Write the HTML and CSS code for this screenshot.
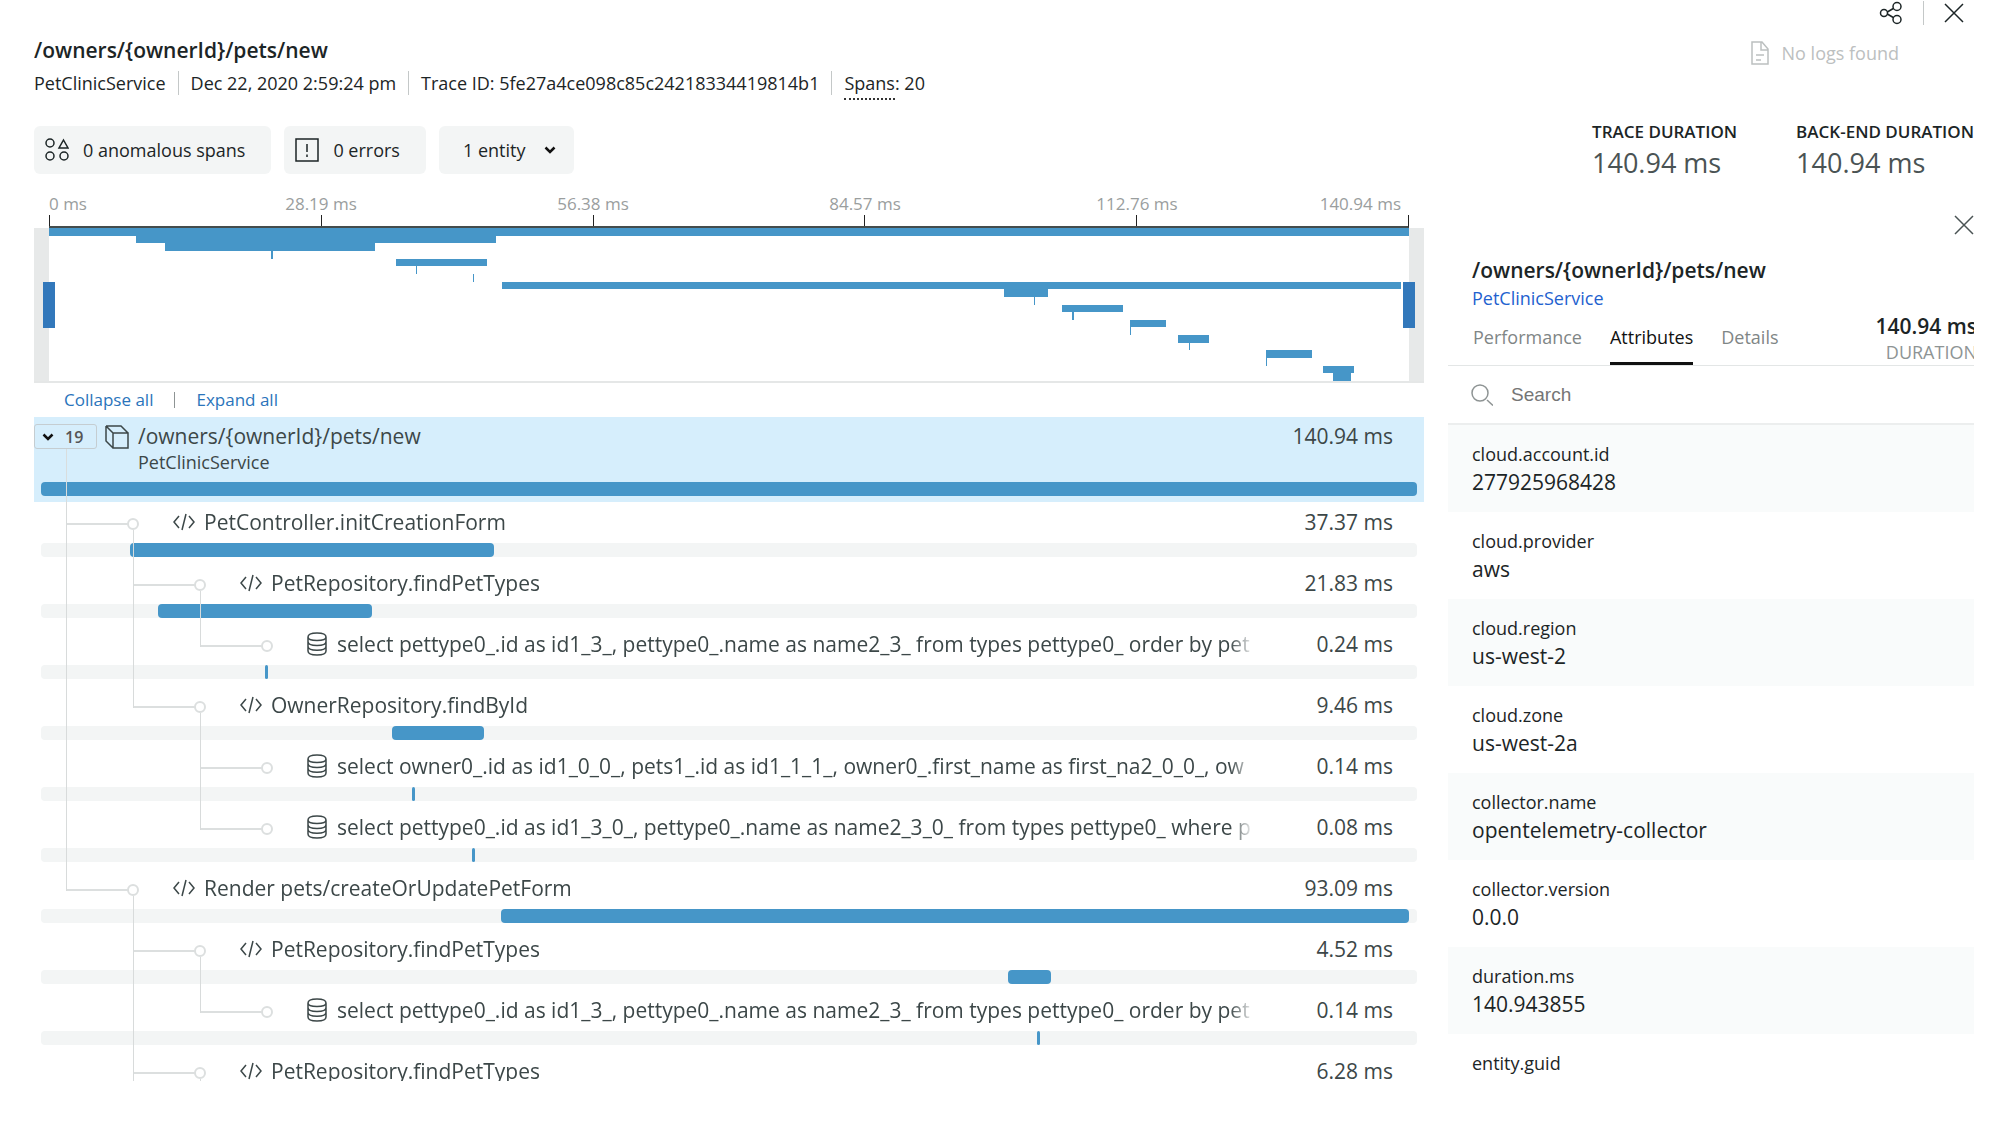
FILE: index.html
```html
<!DOCTYPE html>
<html lang="en">
<head>
<meta charset="utf-8">
<title>/owners/{ownerId}/pets/new</title>
<link rel="stylesheet" href="styles.css">
</head>
<body>
<svg class="sprite" aria-hidden="true">
  <symbol id="code" viewBox="0 0 22 18"><path d="M6 3 1 9l5 6M16 3l5 6-5 6M13 1 9 17"/></symbol>
  <symbol id="database" viewBox="0 0 20 24"><path d="M1 5C1 2.500 5 1 10 1s9 1.500 9 4-4 3.500-9 3.500S1 7.500 1 5zM1 5v14c0 2.500 4 4 9 4s9-1.500 9-4V5M1 9.500c0 2.500 4 4 9 4s9-1.500 9-4M1 14.200c0 2.500 4 4 9 4s9-1.500 9-4"/></symbol>
  <symbol id="close" viewBox="0 0 20 20"><path d="M1 1l18 18M19 1 1 19"/></symbol>
  <symbol id="chevron" viewBox="0 0 12 10"><path d="M1.500 2.500 6 7l4.500-4.500"/></symbol>
</svg>
<div class="app">
  <header class="head">
    <div class="heading">
      <h1 class="title">/owners/{ownerId}/pets/new</h1>
      <ul class="meta">
        <li>PetClinicService</li>
        <li>Dec 22, 2020 2:59:24 pm</li>
        <li>Trace ID: 5fe27a4ce098c85c24218334419814b1</li>
        <li><span class="hint">Spans</span>: 20</li>
      </ul>
    </div>
    <div class="head-side">
      <div class="actions">
        <button class="icon-button" aria-label="Share"><svg width="24" height="24" viewBox="0 0 24 24"><circle cx="5" cy="12" r="3.500"/><circle cx="18" cy="5.500" r="4"/><circle cx="18" cy="18.500" r="4"/><path d="M8.300 11 14.300 7.500M8.300 13l6 3.500"/></svg></button>
        <span class="divider"></span>
        <button class="icon-button" aria-label="Close trace"><svg width="20" height="20"><use href="#close"/></svg></button>
      </div>
      <div class="logs"><svg width="18" height="24" viewBox="0 0 18 24"><path d="M1 1h10l6 7v15H1zM10 1v8h7M5 14h8M5 19h5"/></svg>No logs found</div>
    </div>
  </header>

  <div class="toolbar">
    <div class="chips">
      <button class="chip"><svg width="24" height="24" viewBox="0 0 24 24"><circle cx="5" cy="5" r="4"/><circle cx="5" cy="18" r="4"/><circle cx="19" cy="18" r="4"/><path d="M18.500 2 23 10h-9z"/></svg>0 anomalous spans</button>
      <button class="chip"><svg width="24" height="24" viewBox="0 0 24 24"><path d="M1 1h22v22H1zM12 6v8M12 16.500v2.500"/></svg>0 errors</button>
      <button class="chip chip-entity">1 entity<svg class="bold-icon" width="12" height="10"><use href="#chevron"/></svg></button>
    </div>
    <dl class="totals">
      <div><dt>TRACE DURATION</dt><dd>140.94 ms</dd></div>
      <div><dt>BACK-END DURATION</dt><dd>140.94 ms</dd></div>
    </dl>
  </div>

  <main class="content">
    <section class="trace">
      <div class="axis">
        <div class="axis-labels"><span>0 ms</span><span>28.19 ms</span><span>56.38 ms</span><span>84.57 ms</span><span>112.76 ms</span><span>140.94 ms</span></div>
        <div class="axis-ticks"><i></i><i></i><i></i><i></i><i></i></div>
      </div>
      <div class="minimap">
        <div class="edge"><span class="handle"></span></div>
        <div class="map-bars">
          <i style="margin-left:0%;width:100%"></i>
          <i style="margin-left:6.4%;width:26.5%"></i>
          <i style="margin-left:8.54%;width:15.45%"></i>
          <i style="margin-left:16.3%;width:0.18%"></i>
          <i style="margin-left:25.5%;width:6.7%"></i>
          <i style="margin-left:27%;width:0.08%"></i>
          <i style="margin-left:31.2%;width:0.08%"></i>
          <i style="margin-left:33.33%;width:66.1%"></i>
          <i style="margin-left:70.25%;width:3.24%"></i>
          <i style="margin-left:72.4%;width:0.12%"></i>
          <i style="margin-left:74.5%;width:4.45%"></i>
          <i style="margin-left:75.2%;width:0.15%"></i>
          <i style="margin-left:79.5%;width:2.63%"></i>
          <i style="margin-left:79.5%;width:0.08%"></i>
          <i style="margin-left:83.05%;width:2.25%"></i>
          <i style="margin-left:83.8%;width:0.08%"></i>
          <i style="margin-left:89.47%;width:3.38%"></i>
          <i style="margin-left:89.47%;width:0.08%"></i>
          <i style="margin-left:93.7%;width:2.25%"></i>
          <i style="margin-left:94.4%;width:1.3%"></i>
        </div>
        <div class="edge"><span class="handle"></span></div>
      </div>
      <div class="tree-links"><a href="#all-closed">Collapse all</a><span class="link-divider"></span><a href="#all-open">Expand all</a></div>

      <div class="tree">
        <div class="root">
          <div class="root-line">
            <button class="count" aria-label="Collapse 19 spans"><svg class="bold-icon" width="12" height="10"><use href="#chevron"/></svg>19</button>
            <svg class="cube" width="24" height="24" viewBox="0 0 24 24"><path d="M8 8h15v15H8zM1 1h15l7 7M1 1l7 7M1 1v15l7 7"/></svg>
            <div class="root-name"><div class="name">/owners/{ownerId}/pets/new</div><div class="service">PetClinicService</div></div>
            <span class="time">140.94 ms</span>
          </div>
          <div class="track"><i style="margin-left:0%;width:100%"></i></div>
        </div>
        <ul class="level-1">
          <li>
            <div class="row parent"><svg class="code"><use href="#code"/></svg><span class="name">PetController.initCreationForm</span><span class="time">37.37 ms</span></div>
            <div class="track"><i style="margin-left:6.45%;width:26.5%"></i></div>
            <ul class="level-2">
              <li>
                <div class="row parent"><svg class="code"><use href="#code"/></svg><span class="name">PetRepository.findPetTypes</span><span class="time">21.83 ms</span></div>
                <div class="track"><i style="margin-left:8.53%;width:15.5%"></i></div>
                <ul class="level-3">
                  <li class="last">
                    <div class="row"><svg class="db"><use href="#database"/></svg><span class="name">select pettype0_.id as id1_3_, pettype0_.name as name2_3_ from types pettype0_ order by pet</span><span class="time">0.24 ms</span></div>
                    <div class="track"><i style="margin-left:16.3%;width:0.2%"></i></div>
                  </li>
                </ul>
              </li>
              <li class="last">
                <div class="row parent"><svg class="code"><use href="#code"/></svg><span class="name">OwnerRepository.findById</span><span class="time">9.46 ms</span></div>
                <div class="track"><i style="margin-left:25.5%;width:6.73%"></i></div>
                <ul class="level-3">
                  <li>
                    <div class="row"><svg class="db"><use href="#database"/></svg><span class="name">select owner0_.id as id1_0_0_, pets1_.id as id1_1_1_, owner0_.first_name as first_na2_0_0_, ow</span><span class="time">0.14 ms</span></div>
                    <div class="track"><i style="margin-left:26.95%;width:0.14%"></i></div>
                  </li>
                  <li class="last">
                    <div class="row"><svg class="db"><use href="#database"/></svg><span class="name">select pettype0_.id as id1_3_0_, pettype0_.name as name2_3_0_ from types pettype0_ where p</span><span class="time">0.08 ms</span></div>
                    <div class="track"><i style="margin-left:31.3%;width:0.08%"></i></div>
                  </li>
                </ul>
              </li>
            </ul>
          </li>
          <li class="last">
            <div class="row parent"><svg class="code"><use href="#code"/></svg><span class="name">Render pets/createOrUpdatePetForm</span><span class="time">93.09 ms</span></div>
            <div class="track"><i style="margin-left:33.4%;width:66%"></i></div>
            <ul class="level-2">
              <li>
                <div class="row parent"><svg class="code"><use href="#code"/></svg><span class="name">PetRepository.findPetTypes</span><span class="time">4.52 ms</span></div>
                <div class="track"><i style="margin-left:70.27%;width:3.1%"></i></div>
                <ul class="level-3">
                  <li class="last">
                    <div class="row"><svg class="db"><use href="#database"/></svg><span class="name">select pettype0_.id as id1_3_, pettype0_.name as name2_3_ from types pettype0_ order by pet</span><span class="time">0.14 ms</span></div>
                    <div class="track"><i style="margin-left:72.4%;width:0.14%"></i></div>
                  </li>
                </ul>
              </li>
              <li>
                <div class="row parent"><svg class="code"><use href="#code"/></svg><span class="name">PetRepository.findPetTypes</span><span class="time">6.28 ms</span></div>
                <div class="track"><i style="margin-left:74.5%;width:4.45%"></i></div>
              </li>
            </ul>
          </li>
        </ul>
      </div>
    </section>

    <aside class="panel">
      <button class="icon-button panel-close" aria-label="Close panel"><svg width="20" height="20"><use href="#close"/></svg></button>
      <h2 class="title panel-title">/owners/{ownerId}/pets/new</h2>
      <a class="panel-link" href="#service">PetClinicService</a>
      <div class="panel-bar">
        <div class="tabs" role="tablist">
          <button role="tab">Performance</button>
          <button role="tab" class="active" aria-selected="true">Attributes</button>
          <button role="tab">Details</button>
        </div>
        <div class="panel-duration"><strong>140.94 ms</strong><span>DURATION</span></div>
      </div>
      <label class="search"><svg width="22" height="22" viewBox="0 0 22 22"><circle cx="9" cy="9" r="8"/><path d="M16 16l6 5.500"/></svg><input type="search" placeholder="Search" aria-label="Search"></label>
      <dl class="attributes">
        <div><dt>cloud.account.id</dt><dd>277925968428</dd></div>
        <div><dt>cloud.provider</dt><dd>aws</dd></div>
        <div><dt>cloud.region</dt><dd>us-west-2</dd></div>
        <div><dt>cloud.zone</dt><dd>us-west-2a</dd></div>
        <div><dt>collector.name</dt><dd>opentelemetry-collector</dd></div>
        <div><dt>collector.version</dt><dd>0.0.0</dd></div>
        <div><dt>duration.ms</dt><dd>140.943855</dd></div>
        <div><dt>entity.guid</dt></div>
      </dl>
    </aside>
  </main>
</div>
</body>
</html>
```

FILE: styles.css
```css
*, *::before, *::after { box-sizing: border-box; }
body {
  margin: 0;
  background: #fff;
  color: #1c2526;
  font: 18px/24px "Open Sans", "Noto Sans", sans-serif;
}
ul, dl, dd, h1, h2 { margin: 0; padding: 0; list-style: none; }
button { border: 0; padding: 0; background: none; color: inherit; font: inherit; }
a { text-decoration: none; }
svg { flex: none; display: block; fill: none; stroke: currentColor; stroke-width: 1.5; }
.sprite { position: absolute; width: 0; height: 0; }
.bold-icon { stroke: #111; stroke-width: 2.5; }

.app {
  display: flex;
  flex-direction: column;
  height: calc(100vh - 41px);
  margin: 0 25px 0 34px;
  overflow: hidden;
}

/* Header */
.head { display: flex; justify-content: space-between; flex: none; }
.heading { padding-top: 36px; }
.title { font-size: 21px; line-height: 28px; font-weight: 600; }
.meta { display: flex; margin-top: 7px; padding-bottom: 4px; }
.meta li + li { margin-left: 12px; padding-left: 12px; border-left: 1px solid #c4c8c8; }
.hint { padding-bottom: 3px; border-bottom: 2px dotted #333; }
.head-side { padding-right: 10px; }
.actions { display: flex; align-items: center; justify-content: flex-end; gap: 20px; height: 26px; }
.icon-button { display: flex; }
.divider { width: 1px; height: 24px; background: #c4c8c8; }
.logs { display: flex; align-items: center; gap: 13px; margin: 15px 65px 0 0; color: #bcc0c0; }

/* Toolbar */
.toolbar { display: flex; justify-content: space-between; flex: none; margin-top: 27px; }
.chips { display: flex; gap: 13px; }
.chip { display: flex; align-items: center; gap: 14px; height: 48px; padding: 0 26px 0 11px; border-radius: 6px; background: #f3f5f5; }
.chip-entity { gap: 19px; padding: 0 18px 0 24px; }
.totals { display: flex; gap: 59px; }
.totals dt { font-size: 17px; line-height: 12px; font-weight: 600; white-space: nowrap; }
.totals dd { margin-top: 8px; font-size: 27px; line-height: 34px; color: #4a5354; }

/* Layout below the toolbar */
.content {
  display: grid;
  grid-template-columns: minmax(0, 1fr) 526px;
  gap: 24px;
  flex: 1;
  min-height: 0;
  margin-top: 12px;
}

/* Time axis and overview */
.axis { padding: 0 15px; }
.axis-labels { display: flex; height: 23px; font-size: 17px; line-height: 24px; color: #9a9e9e; }
.axis-labels span { width: 20%; text-align: center; }
.axis-labels span:first-child { width: 10%; text-align: left; }
.axis-labels span:last-child { width: 10%; padding-right: 8px; text-align: right; }
.axis-ticks { display: grid; grid-template-columns: repeat(5, 1fr); height: 13px; border-bottom: 2px solid #444c4c; border-right: 1px solid #222; }
.axis-ticks i { border-left: 1px solid #222; }
.minimap { display: flex; height: 155px; border-bottom: 2px solid #e5e7e7; }
.edge { display: flex; align-items: center; justify-content: center; width: 15px; background: #e7e9e9; }
.edge .handle { position: absolute; width: 12px; height: 46px; background: #3278bb; }
.edge:first-child .handle { margin-left: 14px; }
.edge:last-child .handle { margin-right: 15px; }
.map-bars { display: grid; grid-template-rows: repeat(20, 1fr); flex: 1; }
.map-bars i { min-width: 1px; background: #4696c8; }
.tree-links { display: flex; align-items: center; height: 34px; padding-left: 30px; font-size: 17px; }
.tree-links a { color: #2a74bb; }
.link-divider { width: 1px; height: 16px; margin: 0 21px; background: #8e9494; }

/* Span tree */
.tree { color: #3c4748; }
.root { position: relative; height: 85px; padding-top: 5px; background: #d6eefc; }
.root-line { display: flex; height: 60px; }
.count { display: flex; align-items: center; gap: 11px; width: 63px; height: 25px; margin-top: 2px; padding-left: 7px; border: 1px solid #c5cdd1; border-radius: 3px; font-size: 16px; font-weight: 600; color: #555; }
.cube { margin: 3px 9px 0 8px; }
.root-name { flex: 1; }
.name { font-size: 21px; line-height: 28px; }
.service { line-height: 24px; }
.time { flex: none; width: 131px; margin-right: 31px; font-size: 21px; line-height: 28px; text-align: right; }
.track { height: 14px; margin: 0 7px 6px; border-radius: 4px; background: #f3f5f5; }
.track i { display: block; min-width: 3px; height: 14px; border-radius: 4px; background: #4696c8; }
.level-1 { --guide: 32px; }
.level-2 { --guide: 99px; }
.level-3 { --guide: 166px; }
.tree li { display: flow-root; position: relative; }
.row { position: relative; display: flex; align-items: center; height: 41px; padding: 0 0 2px calc(var(--guide) + 107px); }
.row .name { flex: 1; margin-right: 8px; overflow: hidden; white-space: nowrap; -webkit-mask-image: linear-gradient(to left, transparent, #000 24px); mask-image: linear-gradient(to left, transparent, #000 24px); }
.code { width: 22px; height: 18px; margin-right: 9px; }
.db { width: 20px; height: 24px; margin-right: 10px; }

/* Connector lines and nodes run over the bars */
.root::after { content: ""; position: absolute; left: 32px; top: 32px; bottom: 0; width: 1px; background: #d9dddd; }
.tree li::before { content: ""; position: absolute; z-index: 1; left: var(--guide); top: 0; bottom: 0; width: 62px; border-left: 1px solid #d8dbdb; background: linear-gradient(#dcdfdf, #dcdfdf) 0 21px / 62px 2px no-repeat; }
.tree li.last::before { bottom: auto; height: 23px; }
.row::before { content: ""; position: absolute; left: calc(var(--guide) + 61px); top: 16px; width: 12px; height: 12px; border: 2px solid #dcdfdf; border-radius: 6px; }
.parent::after { content: ""; position: absolute; z-index: 1; left: calc(var(--guide) + 67px); top: 28px; width: 1px; height: 33px; background: #d8dbdb; }

/* Span detail panel */
.panel-close { margin: 23px 0 0 auto; color: #4a5354; }
.panel-title { margin: 21px 0 2px 24px; }
.panel-link { display: block; margin-left: 24px; color: #1f62cf; }
.panel-bar { display: flex; justify-content: space-between; height: 56px; padding-top: 2px; border-bottom: 1px solid #e3e6e6; }
.tabs { display: flex; gap: 28px; margin-left: 25px; color: #7f8686; }
.tabs button { border-bottom: 3px solid transparent; }
.tabs .active { border-color: #111; color: #111; }
.panel-duration { display: flex; flex-direction: column; align-items: flex-end; margin-right: -3px; }
.panel-duration strong { font-size: 21px; line-height: 28px; font-weight: 600; }
.panel-duration span { color: #8e9494; }
.search { display: flex; align-items: center; gap: 18px; height: 59px; padding-left: 23px; border-bottom: 2px solid #eceeee; color: #8e9494; }
.search input { flex: 1; border: 0; padding: 0; outline: 0; background: none; font: 19px/24px "Liberation Sans", Arial, sans-serif; }
.search input::placeholder { color: #757575; opacity: 1; }
.attributes > div { height: 87px; padding: 17px 24px 0; }
.attributes > div:nth-child(odd) { background: #f9fbfb; }
.attributes dd { margin-top: 2px; font-size: 21px; line-height: 28px; }
```
